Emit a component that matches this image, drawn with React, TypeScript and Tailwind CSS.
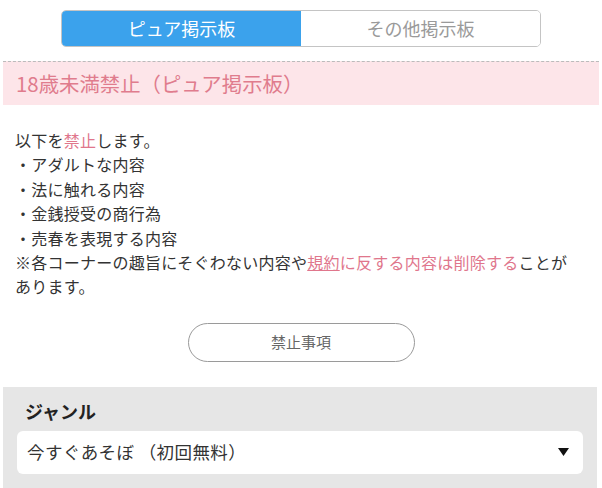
export default function App() {
  return (
    <div
      className="w-[602px] h-[488px] overflow-hidden bg-white text-[#333]"
      style={{ fontFamily: '"Noto Sans CJK JP", "Noto Sans", sans-serif' }}
    >
      {/* Tabs */}
      <div className="pt-[10px] flex justify-center">
        <div className="flex w-[480px] h-[37px] rounded-[5px] border border-[#c4c4c4] overflow-hidden">
          <div className="flex-1 flex items-center justify-center bg-[#3ba2ec] text-white text-[18px]">
            ピュア掲示板
          </div>
          <div className="flex-1 flex items-center justify-center bg-white text-[#9a9a9a] text-[18px]">
            その他掲示板
          </div>
        </div>
      </div>

      <div className="mx-[3px] mt-[14px]">
        {/* Notice heading */}
        <div className="border-t border-dashed border-[#bbb] bg-[#fde5e9] h-[44px] flex items-center pl-[13px] text-[20.4px] text-[#e07c8d]">
          18歳未満禁止（ピュア掲示板）
        </div>

        {/* Rules */}
        <div className="pt-[23px] pl-[12px] text-[16px] leading-[24.4px] tracking-[0.25px]">
          <p>
            以下を<span className="text-[#e0768c]">禁止</span>します。
          </p>
          <p>・アダルトな内容</p>
          <p>・法に触れる内容</p>
          <p>・金銭授受の商行為</p>
          <p>・売春を表現する内容</p>
          <p>
            ※各コーナーの趣旨にそぐわない内容や
            <span className="text-[#e0768c] underline">規約</span>
            <span className="text-[#e0768c]">に反する内容は削除する</span>
            ことが
            <br />
            あります。
          </p>
        </div>

        <div className="flex justify-center pt-[24px]">
          <button className="w-[227px] h-[39px] rounded-full border border-[#9a9a9a] bg-white text-[15px] text-[#666]">
            禁止事項
          </button>
        </div>

        {/* Genre */}
        <div className="mt-[25px] w-[594px] bg-[#e6e6e6] px-[14px] pt-[11px] pb-[14px]">
          <div className="pl-[8px] text-[18px] font-bold text-[#222] leading-[26px]">
            ジャンル
          </div>
          <div className="mt-[7px] h-[43px] rounded-[6px] bg-white flex items-center justify-between pl-[10px] pr-[14px] text-[17.5px] tracking-[0.4px] text-[#333]">
            <span>今すぐあそぼ （初回無料）</span>
            <svg width="11" height="8" viewBox="0 0 11 8">
              <path d="M0 0 H11 L5.5 8 Z" fill="#111" />
            </svg>
          </div>
        </div>
      </div>
    </div>
  );
}
